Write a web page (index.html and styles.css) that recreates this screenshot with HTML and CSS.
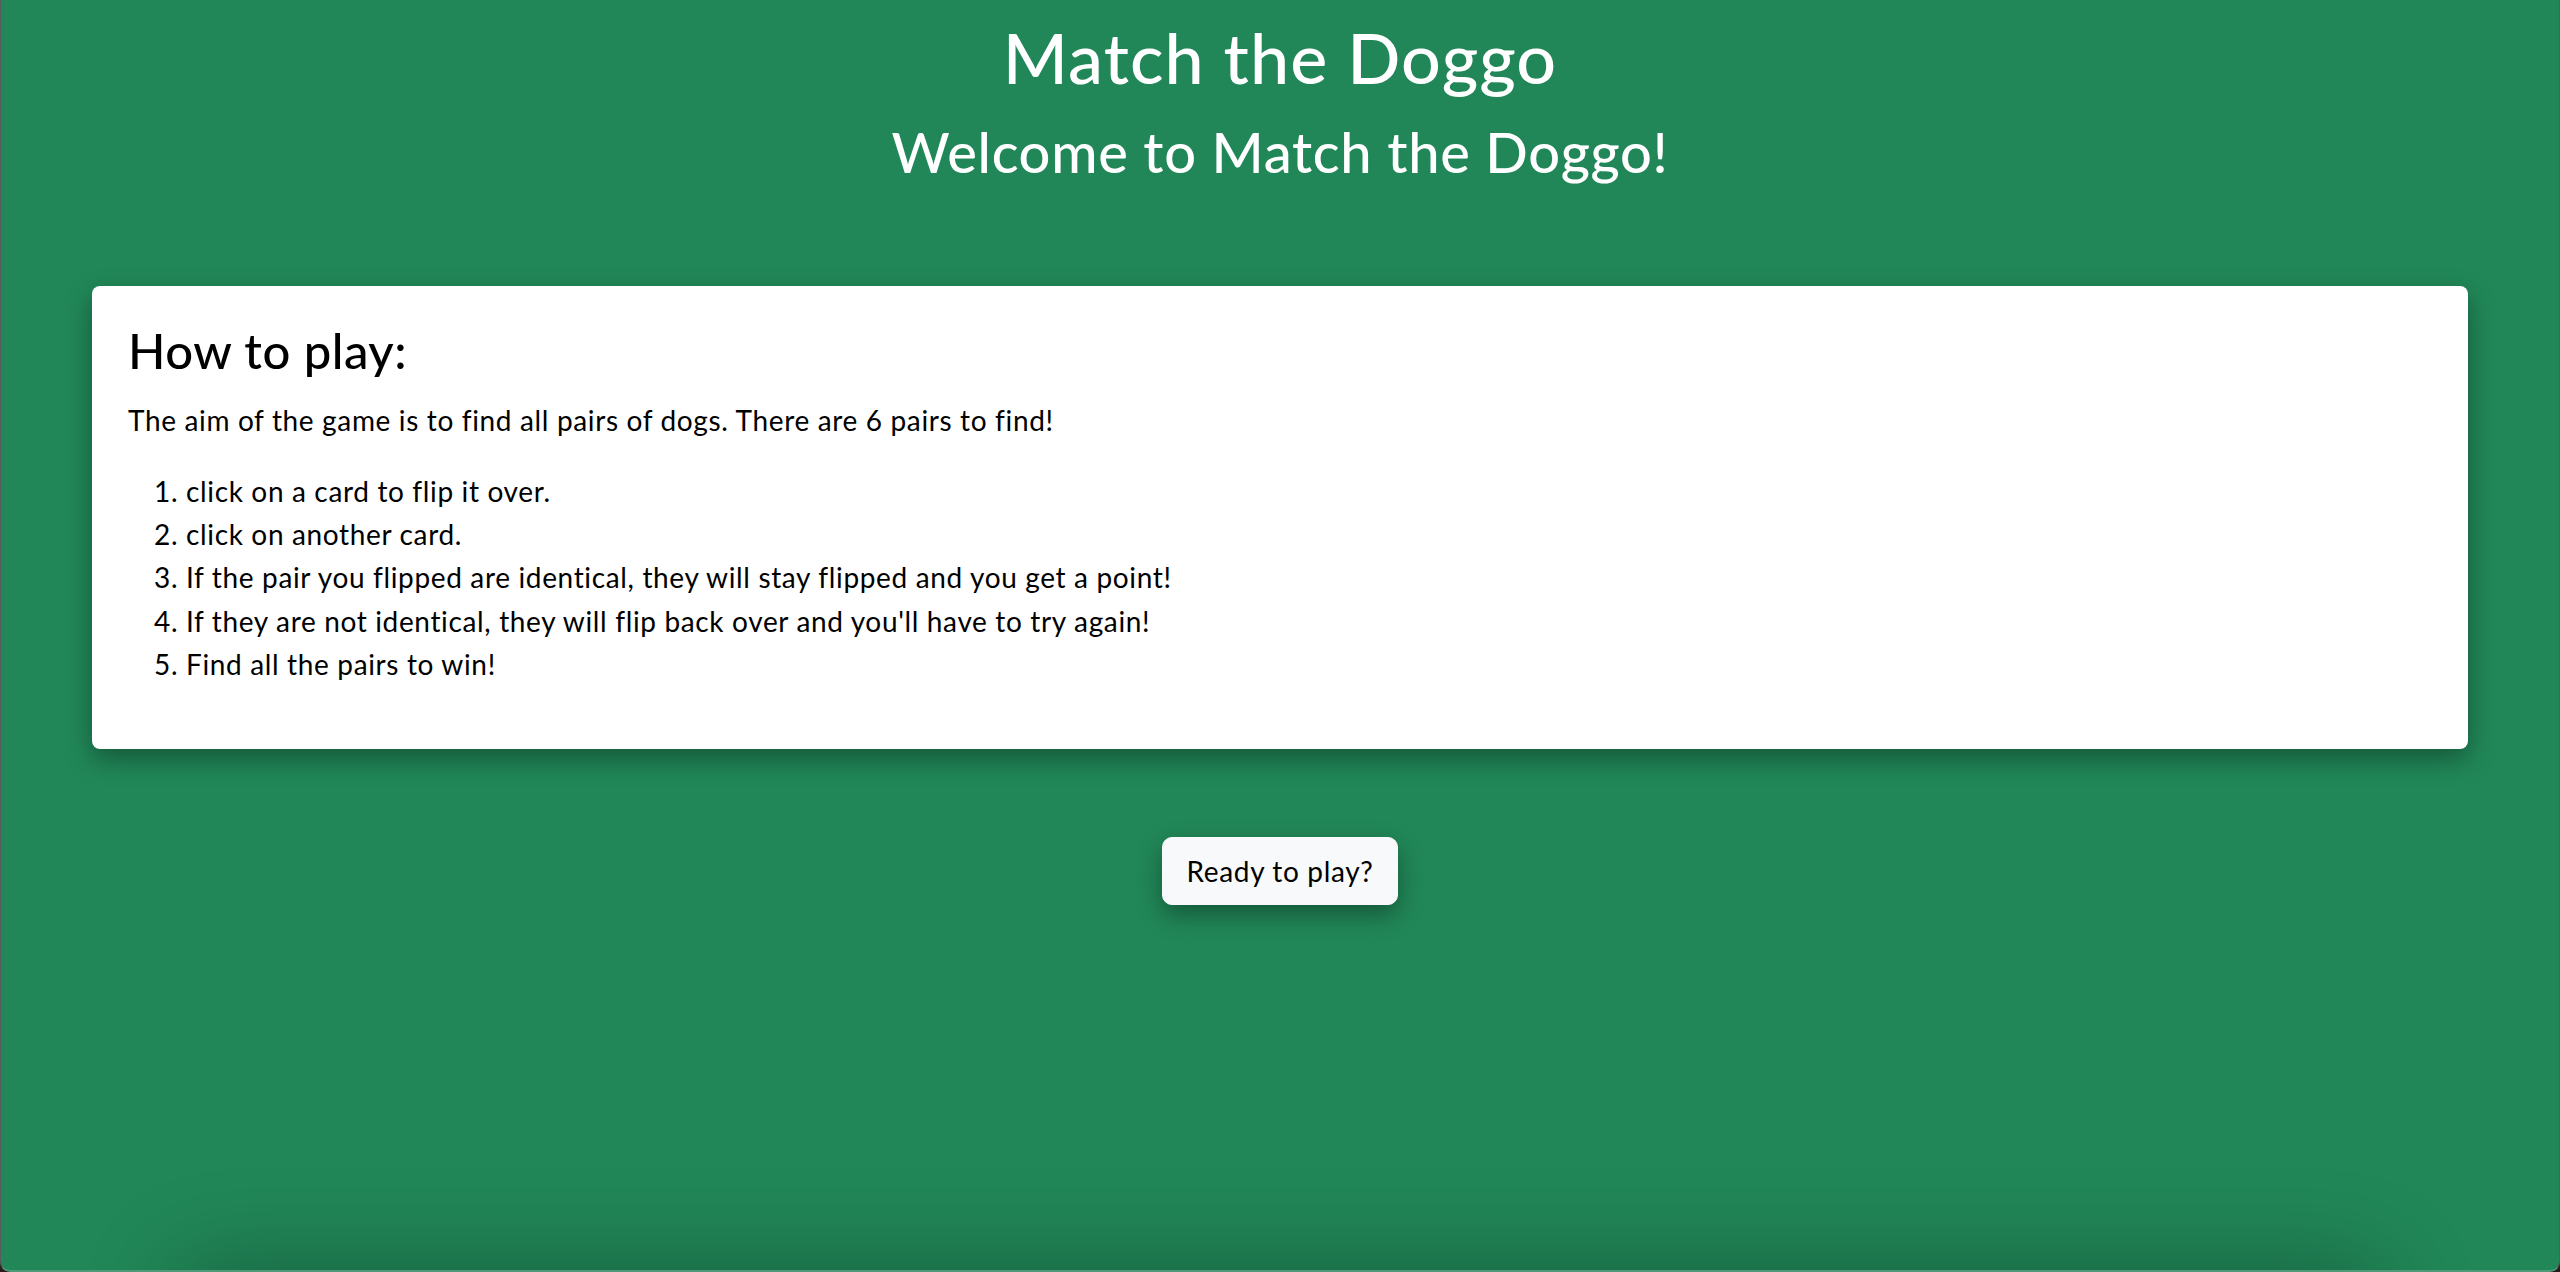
FILE: index.html
```html
<!DOCTYPE html>
<html lang="en">
<head>
<meta charset="utf-8">
<title>Match the Doggo</title>
<link rel="stylesheet" href="styles.css">
</head>
<body>
<div class="frame">
  <header class="header">
    <h1 class="title">Match the Doggo</h1>
    <h2 class="subtitle">Welcome to Match the Doggo!</h2>
  </header>
  <section class="card">
    <h3 class="card-title">How to play:</h3>
    <p class="intro">The aim of the game is to find all pairs of dogs. There are 6 pairs to find!</p>
    <ol class="steps">
      <li>click on a card to flip it over.</li>
      <li>click on another card.</li>
      <li>If the pair you flipped are identical, they will stay flipped and you get a point!</li>
      <li>If they are not identical, they will flip back over and you'll have to try again!</li>
      <li>Find all the pairs to win!</li>
    </ol>
  </section>
  <div class="actions">
    <button class="btn-ready" type="button">Ready to play?</button>
  </div>
  <div class="board"></div>
</div>
</body>
</html>
```

FILE: styles.css
```css
html, body {
  margin: 0;
  padding: 0;
  background: #2a1c1c;
}
body {
  font-family: "Lato", "Noto Sans", sans-serif;
  color: #000;
}
.frame {
  height: 1272px;
  box-sizing: border-box;
  overflow: hidden;
  background: #218758;
  border-left: 1px solid #5a5a5a;
  border-right: 1px solid #5a5a5a;
  border-bottom: 2px solid #4f9a78;
  border-radius: 0 0 10px 10px;
  display: flex;
  flex-direction: column;
  align-items: stretch;
}
.header {
  text-align: center;
  color: #fff;
}
.title {
  margin: 15px 0 0;
  font-size: 70px;
  font-weight: 500;
  line-height: 1.2;
  letter-spacing: 1.1px;
}
.subtitle {
  margin: 19px 0 0;
  font-size: 56px;
  font-weight: 500;
  line-height: 1.2;
  letter-spacing: 0.7px;
}
.card {
  margin: 101px 91px 0;
  background: #fff;
  border-radius: 8px;
  padding: 35px 36px 35px;
  box-shadow: 0 10px 26px rgba(0, 0, 0, 0.35);
}
.card-title {
  margin: 0 0 19px;
  font-size: 49px;
  font-weight: 500;
  line-height: 1.2;
  letter-spacing: 0.5px;
}
.intro {
  margin: 0 0 29px;
  font-size: 28px;
  line-height: 1.5;
  letter-spacing: 0.65px;
}
.steps {
  margin: 0 0 28px;
  padding-left: 58px;
  font-size: 28px;
  line-height: 1.545;
  letter-spacing: 0.65px;
}
.actions {
  display: flex;
  justify-content: center;
  margin-top: 88px;
}
.btn-ready {
  font-family: inherit;
  font-size: 28px;
  line-height: 1.5;
  letter-spacing: 0.65px;
  color: #000;
  background: #f8f9fa;
  border: 1px solid #f8f9fa;
  border-radius: 10px;
  padding: 12px 24px;
  box-shadow: 0 10px 24px rgba(0, 0, 0, 0.35);
}
.board {
  margin: 385px 200px 0;
  height: 400px;
  flex-shrink: 0;
  box-shadow: 0 0 90px 20px rgba(0, 0, 0, 0.3);
}
```
